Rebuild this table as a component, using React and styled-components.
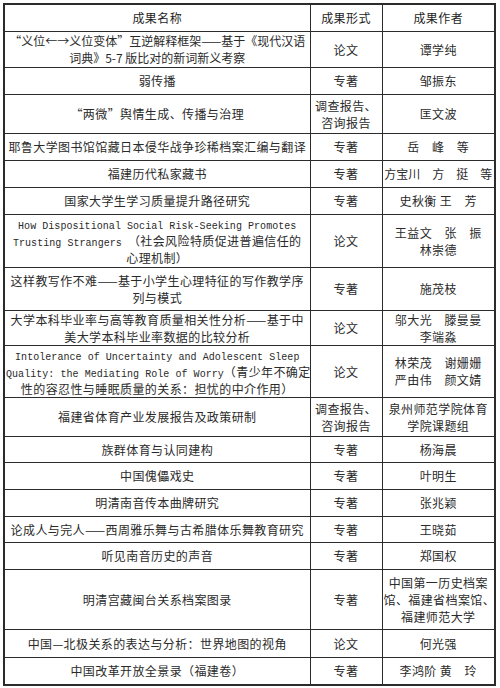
import React from "react";
import styled, { createGlobalStyle } from "styled-components";

const Global = createGlobalStyle`
  html, body { margin: 0; padding: 0; background: #fff; }
  body { font-family: "Noto Sans CJK SC", "Liberation Sans", sans-serif; }
`;

const Page = styled.div`
  padding: 3px 0 0 3px;
  width: 500px;
  box-sizing: border-box;
`;

const Table = styled.table`
  width: 493px;
  border-collapse: collapse;
  table-layout: fixed;
  border: 2px solid #2b2b2b;
  color: #2a2a2a;
  font-size: 12px;
  letter-spacing: 0.4px;
  line-height: 17px;
`;

const Row = styled.tr`
  height: ${(p) => p.$h}px;
`;

const Cell = styled.td`
  border: 1px solid #2b2b2b;
  padding: 0 1px;
  text-align: center;
  vertical-align: middle;
  white-space: nowrap;
  overflow: hidden;
`;

const HeadCell = styled(Cell).attrs({ as: "th" })`
  font-weight: normal;
  color: #1e1e1e;
`;

const Line = styled.div`
  white-space: nowrap;
  height: 17px;
  letter-spacing: ${(p) => (p.$tight ? "0px" : "inherit")};
`;

const En = styled.span`
  font-family: "Liberation Mono", monospace;
  font-size: 10px;
  letter-spacing: 0.05px;
`;

const rows = [
  {
    h: 36,
    tight: true,
    name: ["“义位←→义位变体”互逆解释框架——基于《现代汉语", "词典》5-7 版比对的新词新义考察"],
    form: ["论文"],
    author: ["谭学纯"],
  },
  { h: 27, name: ["弱传播"], form: ["专著"], author: ["邹振东"] },
  {
    h: 39,
    name: ["“两微”舆情生成、传播与治理"],
    form: ["调查报告、", "咨询报告"],
    author: ["匡文波"],
  },
  {
    h: 27,
    name: ["耶鲁大学图书馆馆藏日本侵华战争珍稀档案汇编与翻译"],
    form: ["专著"],
    author: ["岳　峰　等"],
  },
  {
    h: 27,
    name: ["福建历代私家藏书"],
    form: ["专著"],
    author: ["方宝川　方　挺　等"],
    tightAuthor: true,
  },
  { h: 27, name: ["国家大学生学习质量提升路径研究"], form: ["专著"], author: ["史秋衡 王　芳"] },
  {
    h: 53,
    name: [
      <En key="a">How Dispositional Social Risk-Seeking Promotes</En>,
      <>
        <En>Trusting Strangers </En>（社会风险特质促进普遍信任的
      </>,
      "心理机制）",
    ],
    form: ["论文"],
    author: ["王益文　张　振", "林崇德"],
  },
  {
    h: 43,
    name: ["这样教写作不难——基于小学生心理特征的写作教学序", "列与模式"],
    form: ["专著"],
    author: ["施茂枝"],
  },
  {
    h: 35,
    name: ["大学本科毕业率与高等教育质量相关性分析——基于中", "美大学本科毕业率数据的比较分析"],
    form: ["论文"],
    author: ["邬大光　滕曼曼", "李端淼"],
  },
  {
    h: 52,
    name: [
      <En key="b">Intolerance of Uncertainty and Adolescent Sleep</En>,
      <>
        <En>Quality: the Mediating Role of Worry</En>（青少年不确定
      </>,
      "性的容忍性与睡眠质量的关系：担忧的中介作用）",
    ],
    form: ["论文"],
    author: ["林荣茂　谢姗姗", "严由伟　颜文婧"],
  },
  {
    h: 39,
    name: ["福建省体育产业发展报告及政策研制"],
    form: ["调查报告、", "咨询报告"],
    author: ["泉州师范学院体育", "学院课题组"],
  },
  { h: 26, name: ["族群体育与认同建构"], form: ["专著"], author: ["杨海晨"] },
  { h: 27, name: ["中国傀儡戏史"], form: ["专著"], author: ["叶明生"] },
  { h: 27, name: ["明清南音传本曲牌研究"], form: ["专著"], author: ["张兆颖"] },
  {
    h: 26,
    name: ["论成人与完人——西周雅乐舞与古希腊体乐舞教育研究"],
    form: ["专著"],
    author: ["王晓茹"],
  },
  { h: 27, name: ["听见南音历史的声音"], form: ["专著"], author: ["郑国权"] },
  {
    h: 60,
    name: ["明清宫藏闽台关系档案图录"],
    form: ["专著"],
    author: ["中国第一历史档案", "馆、福建省档案馆、", "福建师范大学"],
  },
  {
    h: 28,
    name: ["中国—北极关系的表达与分析：世界地图的视角"],
    form: ["论文"],
    author: ["何光强"],
  },
  { h: 28, name: ["中国改革开放全景录（福建卷）"], form: ["专著"], author: ["李鸿阶 黄　玲"] },
];

const Lines = ({ items, tight }) =>
  items.map((t, i) => (
    <Line key={i} $tight={tight}>
      {t}
    </Line>
  ));

export default function App() {
  return (
    <Page>
      <Global />
      <Table>
        <colgroup>
          <col style={{ width: 306 }} />
          <col style={{ width: 72 }} />
          <col />
        </colgroup>
        <thead>
          <Row $h={27}>
            <HeadCell>成果名称</HeadCell>
            <HeadCell>成果形式</HeadCell>
            <HeadCell>成果作者</HeadCell>
          </Row>
        </thead>
        <tbody>
          {rows.map((r, i) => (
            <Row key={i} $h={r.h}>
              <Cell>
                <Lines items={r.name} tight={r.tight} />
              </Cell>
              <Cell>
                <Lines items={r.form} />
              </Cell>
              <Cell>
                <Lines items={r.author} tight={r.tightAuthor} />
              </Cell>
            </Row>
          ))}
        </tbody>
      </Table>
    </Page>
  );
}
